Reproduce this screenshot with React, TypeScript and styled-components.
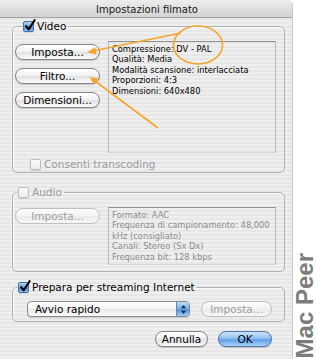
import React from "react";
import styled, { createGlobalStyle } from "styled-components";

const Global = createGlobalStyle`
  html, body { margin: 0; padding: 0; background: #ffffff; }
  body { font-family: "DejaVu Sans", Verdana, sans-serif; }
  * { box-sizing: border-box; }
`;

const Page = styled.div`
  position: relative;
  width: 316px;
  height: 359px;
  display: flex;
  overflow: hidden;
  background: #ffffff;
`;

const Window = styled.div`
  width: 293px;
  height: 359px;
  flex: none;
  display: flex;
  flex-direction: column;
  background: repeating-linear-gradient(
    to bottom,
    #efefef 0px,
    #efefef 2px,
    #e7e7e7 2px,
    #e7e7e7 4px
  );
  border-right: 1px solid #c9c9c9;
  border-top-right-radius: 6px;
`;

const TitleBar = styled.div`
  height: 18px;
  flex: none;
  background: linear-gradient(#ededed, #d3d3d3);
  border-bottom: 1px solid #a3a3a3;
  border-top-right-radius: 6px;
  display: flex;
  align-items: center;
  justify-content: center;
  font-size: 10px;
  color: #1a1a1a;
  padding-left: 2px;
  padding-top: 1px;
`;

const Body = styled.div`
  display: flex;
  flex-direction: column;
  padding-left: 12px;
`;

const Group = styled.fieldset<{ $mt: number; $pt: number; $pb: number }>`
  margin: ${(p) => p.$mt}px 0 0 0;
  padding: ${(p) => p.$pt}px 0 ${(p) => p.$pb}px 2px;
  width: 273px;
  min-width: 0;
  border: 1px solid #b1b1b1;
  border-radius: 5px;
  box-shadow: inset 1px 1px 0 rgba(255, 255, 255, 0.7);
`;

const Legend = styled.legend<{ $ml: number }>`
  margin-left: ${(p) => p.$ml}px;
  padding: 0 2px 0 1px;
  display: flex;
  align-items: center;
  gap: 3px;
  height: 13px;
  font-size: 10.5px;
  line-height: 13px;
  color: #000;
`;

const CheckBox = styled.span<{ $checked?: boolean; $disabled?: boolean }>`
  position: relative;
  flex: none;
  width: 11px;
  height: 11px;
  border-radius: 2px;
  border: 1px solid ${(p) => (p.$checked ? "#4a6f9e" : p.$disabled ? "#bdbdbd" : "#8d8d8d")};
  background: ${(p) =>
    p.$checked
      ? "linear-gradient(#b7d6f6, #6ba6e6 50%, #3c86dc 51%, #8cc0f2)"
      : p.$disabled
      ? "linear-gradient(#fafafa, #eeeeee)"
      : "linear-gradient(#ffffff, #e9e9e9)"};
  box-shadow: 0 1px 1px rgba(0, 0, 0, 0.12);
`;

const CheckMark = styled.svg`
  position: absolute;
  left: 0px;
  top: -3px;
  width: 12px;
  height: 13px;
  overflow: visible;
`;

const Label = styled.span<{ $disabled?: boolean }>`
  font-size: 10.5px;
  color: ${(p) => (p.$disabled ? "#9a9a9a" : "#000")};
  white-space: nowrap;
`;

const Row = styled.div<{ $gap: number; $pl?: number }>`
  display: flex;
  align-items: flex-start;
  gap: ${(p) => p.$gap}px;
  padding-left: ${(p) => p.$pl ?? 0}px;
`;

const ButtonColumn = styled.div<{ $mt: number }>`
  display: flex;
  flex-direction: column;
  gap: 8px;
  margin-top: ${(p) => p.$mt}px;
`;

const PushButton = styled.div<{ $w: number; $disabled?: boolean; $default?: boolean }>`
  width: ${(p) => p.$w}px;
  height: 16px;
  flex: none;
  border-radius: 8px;
  border: 1px solid ${(p) => (p.$default ? "#4f77aa" : p.$disabled ? "#bfbfbf" : "#858585")};
  background: ${(p) =>
    p.$default
      ? "linear-gradient(#cfe4fa 0%, #95c2f1 45%, #5f9fe6 55%, #a9d2f8 100%)"
      : p.$disabled
      ? "linear-gradient(#fbfbfb 0%, #f3f3f3 50%, #ebebeb 51%, #f8f8f8 100%)"
      : "linear-gradient(#ffffff 0%, #f3f3f3 45%, #e2e2e2 55%, #fbfbfb 100%)"};
  box-shadow: ${(p) => (p.$disabled ? "none" : "0 1px 1px rgba(0,0,0,0.18)")};
  display: flex;
  align-items: center;
  justify-content: center;
  font-size: 10.5px;
  color: ${(p) => (p.$disabled ? "#9d9d9d" : "#000")};
  white-space: nowrap;
`;

const InfoBox = styled.div<{ $h: number; $muted?: boolean }>`
  width: 168px;
  height: ${(p) => p.$h}px;
  flex: none;
  border: 1px solid #b8b8b8;
  border-top-color: #8f8f8f;
  border-bottom-color: #d6d6d6;
  padding: 2px 3px;
  font-size: 8.3px;
  line-height: 10.4px;
  color: ${(p) => (p.$muted ? "#8c8c8c" : "#000")};
`;

const Line = styled.div`
  white-space: nowrap;
`;

const OptionRow = styled.div<{ $ml: number; $mt: number }>`
  display: flex;
  align-items: center;
  gap: 3px;
  margin: ${(p) => p.$mt}px 0 0 ${(p) => p.$ml}px;
  height: 12px;
`;

const Popup = styled.div`
  width: 163px;
  height: 16px;
  flex: none;
  display: flex;
  border: 1px solid #8a8a8a;
  border-radius: 4px;
  overflow: hidden;
  background: linear-gradient(#ffffff, #f4f4f4 50%, #e7e7e7 51%, #fbfbfb);
  box-shadow: 0 1px 1px rgba(0, 0, 0, 0.15);
`;

const PopupLabel = styled.span`
  flex: 1;
  padding-left: 7px;
  font-size: 10.5px;
  line-height: 14px;
  color: #000;
`;

const PopupArrows = styled.span`
  width: 13px;
  flex: none;
  display: flex;
  align-items: center;
  justify-content: center;
  border-left: 1px solid #6386b5;
  background: linear-gradient(#c0dcf8, #79b0ec 50%, #4f92e0 51%, #9cc9f4);
`;

const Footer = styled.div`
  display: flex;
  justify-content: flex-end;
  gap: 10px;
  width: 260px;
  margin-top: 9px;
`;

const Side = styled.div`
  flex: 1;
  display: flex;
  flex-direction: column;
  justify-content: flex-end;
  align-items: center;
  padding-bottom: 1px;
`;

const Watermark = styled.span`
  writing-mode: vertical-rl;
  transform: rotate(180deg);
  font-family: "Liberation Sans", Arial, sans-serif;
  font-weight: bold;
  font-size: 24px;
  line-height: 22px;
  color: #7c7c7c;
  white-space: nowrap;
`;

const Annotations = styled.svg`
  position: absolute;
  left: 0;
  top: 0;
  width: 316px;
  height: 359px;
  pointer-events: none;
`;

function Check({ checked, disabled }: { checked?: boolean; disabled?: boolean }) {
  return (
    <CheckBox $checked={checked} $disabled={disabled}>
      {checked && (
        <CheckMark viewBox="0 0 12 13">
          <path d="M2.2 7.2 L4.6 10.4 L10.6 1.2" fill="none" stroke="#000" strokeWidth="2.1" strokeLinecap="round" strokeLinejoin="round" />
        </CheckMark>
      )}
    </CheckBox>
  );
}

export default function App() {
  const orange = "#f4a52c";
  return (
    <Page>
      <Global />
      <Window>
        <TitleBar>Impostazioni filmato</TitleBar>
        <Body>
          <Group $mt={2} $pt={8} $pb={2}>
            <Legend $ml={7}>
              <Check checked />
              <Label>Video</Label>
            </Legend>
            <Row $gap={8}>
              <ButtonColumn $mt={3}>
                <PushButton $w={85}>Imposta...</PushButton>
                <PushButton $w={85}>Filtro...</PushButton>
                <PushButton $w={85}>Dimensioni...</PushButton>
              </ButtonColumn>
              <InfoBox $h={112}>
                <Line>Compressione: DV - PAL</Line>
                <Line>Qualità: Media</Line>
                <Line>Modalità scansione: interlacciata</Line>
                <Line>Proporzioni: 4:3</Line>
                <Line>Dimensioni: 640x480</Line>
              </InfoBox>
            </Row>
            <OptionRow $ml={15} $mt={5}>
              <Check disabled />
              <Label $disabled>Consenti transcoding</Label>
            </OptionRow>
          </Group>

          <Group $mt={13} $pt={8} $pb={6}>
            <Legend $ml={2}>
              <Check disabled />
              <Label $disabled>Audio</Label>
            </Legend>
            <Row $gap={8}>
              <ButtonColumn $mt={1}>
                <PushButton $w={85} $disabled>
                  Imposta...
                </PushButton>
              </ButtonColumn>
              <InfoBox $h={58} $muted>
                <Line>Formato: AAC</Line>
                <Line>Frequenza di campionamento: 48,000</Line>
                <Line>kHz (consigliato)</Line>
                <Line>Canali: Stereo (Sx Dx)</Line>
                <Line>Frequenza bit: 128 kbps</Line>
              </InfoBox>
            </Row>
          </Group>

          <Group $mt={9} $pt={7} $pb={4}>
            <Legend $ml={2}>
              <Check checked />
              <Label>Prepara per streaming Internet</Label>
            </Legend>
            <Row $gap={11} $pl={12}>
              <Popup>
                <PopupLabel>Avvio rapido</PopupLabel>
                <PopupArrows>
                  <svg width="7" height="11" viewBox="0 0 7 11">
                    <path d="M3.5 1 L6.2 4.3 L0.8 4.3 Z" fill="#1b2a44" />
                    <path d="M3.5 10 L6.2 6.7 L0.8 6.7 Z" fill="#1b2a44" />
                  </svg>
                </PopupArrows>
              </Popup>
              <PushButton $w={71} $disabled>
                Imposta...
              </PushButton>
            </Row>
          </Group>

          <Footer>
            <PushButton $w={53}>Annulla</PushButton>
            <PushButton $w={54} $default>
              OK
            </PushButton>
          </Footer>
        </Body>
      </Window>
      <Side>
        <Watermark>Mac Peer</Watermark>
      </Side>
      <Annotations viewBox="0 0 316 359">
        <ellipse cx="198" cy="45" rx="24.5" ry="19" fill="none" stroke={orange} strokeWidth="1.6" />
        <line x1="181" y1="33" x2="93" y2="51" stroke={orange} strokeWidth="1.6" />
        <path d="M87 52.3 L95.2 47.3 L96.8 54.6 Z" fill={orange} />
        <line x1="158" y1="128" x2="95" y2="81" stroke={orange} strokeWidth="1.6" />
        <path d="M89.5 77 L98.4 78.6 L94 84.5 Z" fill={orange} />
      </Annotations>
    </Page>
  );
}
